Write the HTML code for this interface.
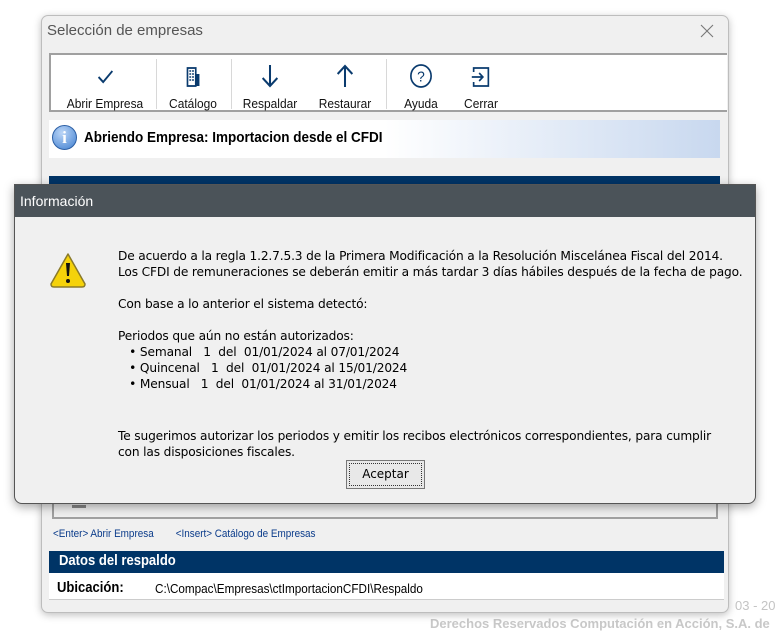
<!DOCTYPE html>
<html><head><meta charset="utf-8"><style>
*{margin:0;padding:0;box-sizing:border-box}
body{width:777px;height:633px;background:#fff;position:relative;overflow:hidden;font-family:"Liberation Sans",sans-serif}
.a{position:absolute}
.win{left:41px;top:15px;width:688px;height:598px;background:#f0f0f0;border:1px solid #bdbdbd;border-radius:7px;box-shadow:0 2px 8px rgba(0,0,0,.25)}
.tb{left:49px;top:53px;width:678px;height:59px;background:#fff;border:2px solid #a0a0a0;border-right:none}
.btn{position:absolute;top:2px;text-align:center;font-size:13px;color:#111;transform:scaleX(.92)}
.sep{position:absolute;top:4px;width:1px;height:50px;background:#d8d8d8}
.dlg{left:14px;top:184px;width:742px;height:320px;background:#f0f0f0;border:1px solid #555;border-radius:0 0 8px 8px;box-shadow:0 3px 10px rgba(0,0,0,.35)}
.dt{left:0;top:0;width:740px;height:32px;background:#4b5359;color:#fff;font-size:14px;padding:8px 5px}
.txt{font-family:"DejaVu Sans",sans-serif;font-size:12.2px;color:#000;letter-spacing:-.15px;line-height:16px;white-space:nowrap}
</style></head><body>
<div class="a" style="left:735px;top:598px;font-size:13px;color:#c4c4c4">03 - 20</div>
<div class="a" style="left:430px;top:616px;font-size:13px;color:#c8c8c8;font-weight:bold">Derechos Reservados Computación en Acción, S.A. de</div>
<div class="a win"></div>
<div class="a" style="left:47px;top:22px;font-size:15px;color:#555">Selección de empresas</div>
<svg class="a" style="left:700px;top:24px" width="14" height="14" viewBox="0 0 14 14"><path d="M1 1l12 12M13 1L1 13" stroke="#777" stroke-width="1.1"/></svg>
<div class="a tb">
 <div class="btn" style="left:4px;width:100px"><svg width="24" height="24" viewBox="0 0 24 24" style="margin-top:8px"><path d="M5 12l5 5L20 6" stroke="#0a3b6e" stroke-width="2" fill="none"/></svg><div style="margin-top:4px">Abrir Empresa</div></div>
 <div class="sep" style="left:105px"></div>
 <div class="btn" style="left:108px;width:68px"><svg width="24" height="24" viewBox="0 0 24 24" style="margin-top:8px"><rect x="6" y="3" width="9" height="18" fill="none" stroke="#0a3b6e" stroke-width="1.8"/><rect x="15" y="9" width="4" height="12" fill="#0a3b6e"/><path d="M8 6h2M11 6h2M8 9h2M11 9h2M8 12h2M11 12h2M8 15h2M11 15h2" stroke="#0a3b6e" stroke-width="1.5"/></svg><div style="margin-top:4px">Catálogo</div></div>
 <div class="sep" style="left:180px"></div>
 <div class="btn" style="left:185px;width:68px"><svg width="24" height="26" viewBox="0 0 24 26" style="margin-top:6px"><path d="M12 2v21M4 15l8 8 8-8" stroke="#0a3b6e" stroke-width="2.2" fill="none"/></svg><div style="margin-top:4px">Respaldar</div></div>
 <div class="btn" style="left:260px;width:68px"><svg width="24" height="26" viewBox="0 0 24 26" style="margin-top:6px"><path d="M12 24V3M4 11l8-8 8 8" stroke="#0a3b6e" stroke-width="2.2" fill="none"/></svg><div style="margin-top:4px">Restaurar</div></div>
 <div class="sep" style="left:335px"></div>
 <div class="btn" style="left:340px;width:60px"><svg width="26" height="26" viewBox="0 0 26 26" style="margin-top:6px"><circle cx="13" cy="13" r="11" fill="none" stroke="#0a3b6e" stroke-width="1.8"/><text x="13" y="18.5" text-anchor="middle" font-size="15" fill="#0a3b6e" font-family="Liberation Sans">?</text></svg><div style="margin-top:4px">Ayuda</div></div>
 <div class="btn" style="left:400px;width:60px"><svg width="24" height="24" viewBox="0 0 24 24" style="margin-top:8px"><path d="M4 7V3h16v18H4v-4" stroke="#0a3b6e" stroke-width="1.8" fill="none"/><path d="M2 12h12M10 8l4 4-4 4" stroke="#0a3b6e" stroke-width="1.8" fill="none"/></svg><div style="margin-top:4px">Cerrar</div></div>
</div>
<div class="a" style="left:49px;top:120px;width:671px;height:38px;background:linear-gradient(90deg,#fff 0%,#fff 50%,#c8d8ef 100%)"></div>
<div class="a" style="left:52px;top:125px;width:25px;height:25px;border-radius:50%;background:radial-gradient(circle at 40% 30%,#bcd6f7,#3f7fd0);border:1px solid #2c5fa5;color:#fff;font-weight:bold;font-size:17px;text-align:center;line-height:23px;font-family:'Liberation Serif',serif">i</div>
<div class="a" style="left:84px;top:129px;font-size:15px;font-weight:bold;color:#000;transform:scaleX(.9);transform-origin:left">Abriendo Empresa: Importacion desde el CFDI</div>
<div class="a" style="left:49px;top:176px;width:671px;height:10px;background:#003466"></div>
<div class="a" style="left:52px;top:500px;width:666px;height:19px;border:2px solid #a0a0a0;border-top:none;background:#f0f0f0"></div>
<div class="a" style="left:72px;top:505px;width:14px;height:3px;background:#888"></div>
<div class="a" style="left:53px;top:528px;font-size:11px;color:#0a3b8a;transform:scaleX(.9);transform-origin:left">&lt;Enter&gt; Abrir Empresa&nbsp;&nbsp;&nbsp;&nbsp;&nbsp;&nbsp;&nbsp;&nbsp;&lt;Insert&gt; Catálogo de Empresas</div>
<div class="a" style="left:49px;top:551px;width:675px;height:22px;background:#003466;color:#fff;font-weight:bold;font-size:14.5px;padding:2px 10px"><span style="display:inline-block;transform:scaleX(.9);transform-origin:left">Datos del respaldo</span></div>
<div class="a" style="left:49px;top:573px;width:675px;height:27px;background:#fff;border-bottom:1px solid #ccc"></div>
<div class="a" style="left:57px;top:580px;font-size:14.5px;font-weight:bold;transform:scaleX(.9);transform-origin:left">Ubicación:</div>
<div class="a" style="left:155px;top:581px;font-size:13px;transform:scaleX(.9);transform-origin:left">C:\Compac\Empresas\ctImportacionCFDI\Respaldo</div>
<div class="a dlg">
 <div class="a dt">Información</div>
 <svg class="a" style="left:33px;top:66px" width="40" height="38" viewBox="0 0 40 38"><path d="M20 3L37 33Q37 36 34 36H6Q3 36 3 33Z" fill="#f5d20a" stroke="#8a7a2a" stroke-width="1.5" stroke-linejoin="round"/><path d="M18 12h4l-1 13h-2z" fill="#111"/><circle cx="20" cy="30" r="2" fill="#111"/></svg>
 <div class="a txt" style="left:103px;top:63px">De acuerdo a la regla 1.2.7.5.3 de la Primera Modificación a la Resolución Miscelánea Fiscal del 2014.<br>Los CFDI de remuneraciones se deberán emitir a más tardar 3 días hábiles después de la fecha de pago.<br><br>Con base a lo anterior el sistema detectó:<br><br>Periodos que aún no están autorizados:<br>&nbsp;&nbsp;&nbsp;• Semanal &nbsp;&nbsp;1 &nbsp;del &nbsp;01/01/2024 al 07/01/2024<br>&nbsp;&nbsp;&nbsp;• Quincenal &nbsp;&nbsp;1 &nbsp;del &nbsp;01/01/2024 al 15/01/2024<br>&nbsp;&nbsp;&nbsp;• Mensual &nbsp;&nbsp;1 &nbsp;del &nbsp;01/01/2024 al 31/01/2024</div>
 <div class="a txt" style="left:103px;top:243px">Te sugerimos autorizar los periodos y emitir los recibos electrónicos correspondientes, para cumplir<br>con las disposiciones fiscales.</div>
 <div class="a" style="left:331px;top:275px;width:79px;height:29px;border:1px solid #777;background:#e8e8e8;padding:2px"><div style="border:1px dotted #333;height:23px;text-align:center;font-family:'DejaVu Sans',sans-serif;font-size:12px;line-height:21px">Aceptar</div></div>
</div>
</body></html>
